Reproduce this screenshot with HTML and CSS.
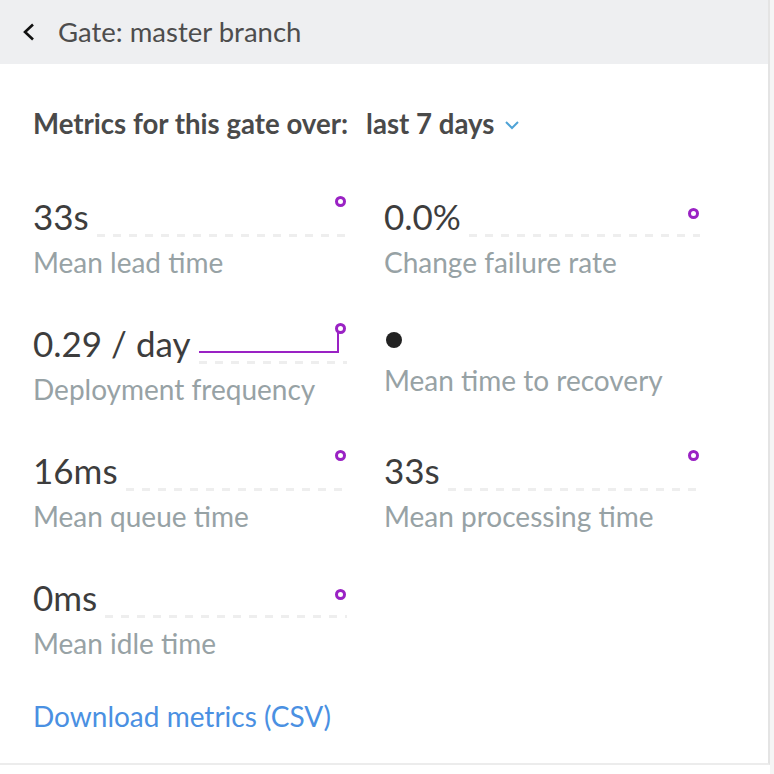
FILE: index.html
```html
<!DOCTYPE html>
<html>
<head>
<meta charset="utf-8">
<link rel="stylesheet" href="styles.css">
</head>
<body>
<div class="page">
  <div class="panel">
    <header class="header">
      <svg class="back" width="14" height="18" viewBox="0 0 14 18"><polyline points="11,1.5 3,9 11,16.5" fill="none" stroke="#111" stroke-width="2.6"/></svg>
      <span class="title">Gate: master branch</span>
    </header>
    <main class="content">
      <div class="period">
        <span>Metrics for this gate over:</span>
        <span class="select">last 7 days
          <svg class="caret" width="16" height="10" viewBox="0 0 16 10"><polyline points="2,2 8,8 14,2" fill="none" stroke="#4fa3d6" stroke-width="2"/></svg>
        </span>
      </div>
      <div class="grid">
        <div class="metric">
          <div class="top">
            <span class="value">33s</span>
            <div class="chart"><span class="dot dot-top"></span></div>
          </div>
          <div class="label">Mean lead time</div>
        </div>
        <div class="metric">
          <div class="top">
            <span class="value">0.0%</span>
            <div class="chart"><span class="dot dot-mid"></span></div>
          </div>
          <div class="label">Change failure rate</div>
        </div>
        <div class="metric">
          <div class="top">
            <span class="value">0.29 / day</span>
            <div class="chart"><span class="trend"></span><span class="dot dot-top"></span></div>
          </div>
          <div class="label">Deployment frequency</div>
        </div>
        <div class="metric">
          <div class="top top-empty">
            <span class="blank"></span>
          </div>
          <div class="label">Mean time to recovery</div>
        </div>
        <div class="metric">
          <div class="top">
            <span class="value">16ms</span>
            <div class="chart"><span class="dot dot-top"></span></div>
          </div>
          <div class="label">Mean queue time</div>
        </div>
        <div class="metric">
          <div class="top">
            <span class="value">33s</span>
            <div class="chart"><span class="dot dot-top"></span></div>
          </div>
          <div class="label">Mean processing time</div>
        </div>
        <div class="metric">
          <div class="top">
            <span class="value">0ms</span>
            <div class="chart"><span class="dot dot-mid"></span></div>
          </div>
          <div class="label">Mean idle time</div>
        </div>
      </div>
      <a class="download" href="#">Download metrics (CSV)</a>
    </main>
  </div>
  <div class="side"></div>
</div>
</body>
</html>
```

FILE: styles.css
```css
* { box-sizing: border-box; }
html, body { margin: 0; padding: 0; background: #fff; }
body { font-family: Lato, "Open Sans", sans-serif; width: 774px; height: 774px; overflow: hidden; }
.page { display: flex; height: 774px; }
.panel { width: 770px; height: 765px; border-right: 2px solid #e4e4e4; border-bottom: 2px solid #ececec; }
.side { flex: 1; background: #f5f5f5; }
.header { height: 64px; background: #eeeff1; display: flex; align-items: center; padding-left: 22px; }
.back { display: block; margin-right: 22px; }
.title { font-size: 27.5px; color: #4d4d4d; line-height: 34px; }
.content { padding: 43px 0 0 33px; }
.period { font-size: 27.6px; line-height: 34px; font-weight: 700; color: #4a4a4a; display: flex; align-items: center; height: 34px; }
.select { margin-left: 18px; display: flex; align-items: center; }
.caret { margin-left: 10px; margin-top: 2px; }
.grid { display: grid; grid-template-columns: 314px 316px; column-gap: 37px; row-gap: 44px; margin-top: 55px; }
.top { display: flex; align-items: flex-end; height: 41px; }
.value { font-size: 35px; color: #3d3d3d; line-height: 35px; padding-bottom: 3px; white-space: nowrap; }
.chart { flex: 1; height: 41px; position: relative; margin-left: 8px;
  background: repeating-linear-gradient(to right, #eeeeee 0 8px, transparent 8px 16px) left bottom / 100% 3px no-repeat; }
.dot { position: absolute; right: 1.5px; width: 11px; height: 11px; border: 3.5px solid #9a22c4; border-radius: 50%; background: #fff; }
.dot-top { top: 0; }
.dot-mid { top: 12px; }
.trend { position: absolute; left: 0; right: 8px; top: 5px; bottom: 11px; border-right: 2px solid #9a22c4; border-bottom: 2px solid #9a22c4; }
.top-empty { height: 32px; align-items: flex-start; }
.blank { width: 16px; height: 16px; border-radius: 50%; background: #222; margin-top: 9px; margin-left: 2px; }
.label { font-size: 28px; color: #97a2a5; margin-top: 8px; line-height: 34px; white-space: nowrap; }
.download { display: inline-block; margin-top: 39px; font-size: 28px; line-height: 34px; color: #4a90e2; text-decoration: none; }
```
